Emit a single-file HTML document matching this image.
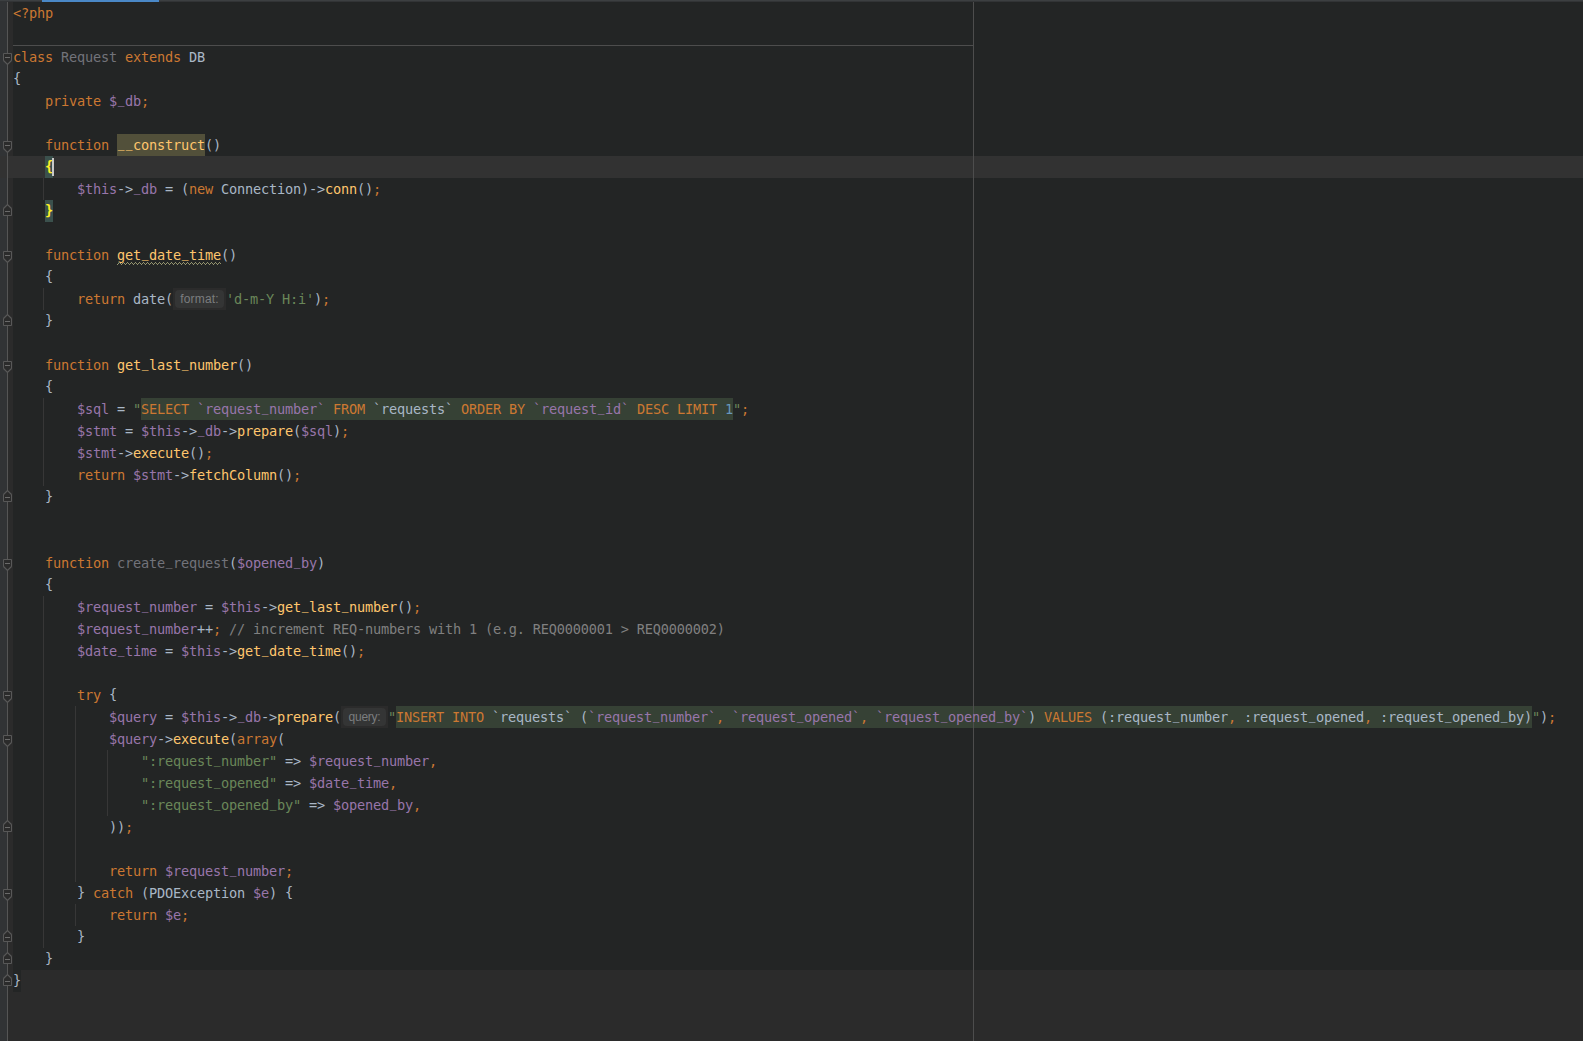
<!DOCTYPE html>
<html lang="en"><head><meta charset="utf-8"><title>Request.php</title>
<style>
html,body{margin:0;padding:0;background:#2b2b2b;}
body{width:1583px;height:1041px;position:relative;overflow:hidden;font-family:"DejaVu Sans Mono", "Liberation Mono", monospace;}
#code{position:absolute;left:13px;top:2px;width:1570px;height:968px;background:#232525;}
#last{position:absolute;left:13px;top:970px;width:8px;height:22px;background:#232525;}
#gut{position:absolute;left:0;top:2px;width:8px;height:1039px;background:#313335;}
#gut2{position:absolute;left:8px;top:2px;width:5px;height:1039px;background:#2b2b2b;}
#fl{position:absolute;left:7px;top:2px;width:1px;height:1039px;background:#555555;}
#top0{position:absolute;left:0;top:0;width:1583px;height:1px;background:#3c3f41;}
#top1{position:absolute;left:0;top:1px;width:1583px;height:1px;background:#323436;}
#tab{position:absolute;left:42px;top:0;width:117px;height:2px;background:#4a88c7;}
#cur{position:absolute;left:0;top:156px;width:1583px;height:22px;background:#323232;}
#rm{position:absolute;left:973px;top:2px;width:1px;height:1039px;background:#4d4d4d;}
#sep{position:absolute;left:13px;top:45px;width:960px;height:1px;background:#4d4d4d;}
#caret{position:absolute;left:52px;top:158px;width:2px;height:18px;background:#c8c8c8;}
.r{position:absolute;}
.ig{position:absolute;width:1px;background:#373737;}
.fm{position:absolute;left:0;}
.wavy{position:absolute;} .wavy pattern rect{fill:#95956f} .ln i{font-style:normal;position:relative;top:-3px;display:inline-block;transform:scaleX(0.82)} .ln b{font-weight:inherit;position:relative;top:-1px}
.ln{position:absolute;left:13px;height:22px;line-height:22px;width:1570px;white-space:pre;font-size:13.6px;letter-spacing:-0.1879px;}
.ln span{display:inline-block;height:22px;vertical-align:top;overflow:visible;}
.k{color:#cc7832}.d{color:#a9b7c6}.f{color:#ffc66d}.v{color:#9876aa}.s{color:#6a8759}.c{color:#808080}.n{color:#6897bb}.u{color:#72737a}
.b{color:#ffef28;font-weight:bold}
.ln span.hint{margin:2px 2px 0 2px;height:18px;line-height:19px;border-radius:4px;background:#343535;color:#7b7d7f;font-family:"Liberation Sans","DejaVu Sans",sans-serif;font-size:12px;text-align:center;}
</style></head>
<body>
<div id="code"></div><div id="last"></div>
<div id="cur"></div>
<div id="gut"></div><div id="gut2"></div>
<div id="gcur" style="position:absolute;left:0;top:156px;width:13px;height:22px;background:#323232"></div>
<div id="fl"></div>
<div id="top0"></div><div id="top1"></div><div id="tab"></div>
<div id="sep"></div>
<div class="r" style="left:117px;top:134px;width:88px;height:22px;background:#52503a"></div><div class="r" style="left:45px;top:156px;width:8px;height:22px;background:#3b514d"></div><div class="r" style="left:45px;top:200px;width:8px;height:22px;background:#3b514d"></div><div class="r" style="left:173px;top:288px;width:53px;height:22px;background:#2b2b2b"></div><div class="r" style="left:141px;top:398px;width:592px;height:22px;background:#364135"></div><div class="r" style="left:341px;top:706px;width:47px;height:22px;background:#2b2b2b"></div><div class="r" style="left:396px;top:706px;width:1136px;height:22px;background:#364135"></div>
<div class="ig" style="left:43px;top:178px;height:22px"></div><div class="ig" style="left:43px;top:288px;height:22px"></div><div class="ig" style="left:43px;top:398px;height:88px"></div><div class="ig" style="left:43px;top:596px;height:352px"></div><div class="ig" style="left:75px;top:706px;height:176px"></div><div class="ig" style="left:75px;top:904px;height:22px"></div><div class="ig" style="left:107px;top:750px;height:66px"></div>
<div id="rm"></div>
<svg class="fm" style="top:46px" width="14" height="22" viewBox="0 0 14 22"><path d="M3.5 7.5H11.5V14.5L7.5 18.5L3.5 14.5Z" fill="#2b2b2b" stroke="#585858"/><path d="M11.5 14.5L7.5 18.5L3.5 14.5" fill="none" stroke="#585858" stroke-width="1.2"/><path d="M5 11.5H10" stroke="#6a6a6a"/></svg><svg class="fm" style="top:134px" width="14" height="22" viewBox="0 0 14 22"><path d="M3.5 7.5H11.5V14.5L7.5 18.5L3.5 14.5Z" fill="#2b2b2b" stroke="#585858"/><path d="M11.5 14.5L7.5 18.5L3.5 14.5" fill="none" stroke="#585858" stroke-width="1.2"/><path d="M5 11.5H10" stroke="#6a6a6a"/></svg><svg class="fm" style="top:244px" width="14" height="22" viewBox="0 0 14 22"><path d="M3.5 7.5H11.5V14.5L7.5 18.5L3.5 14.5Z" fill="#2b2b2b" stroke="#585858"/><path d="M11.5 14.5L7.5 18.5L3.5 14.5" fill="none" stroke="#585858" stroke-width="1.2"/><path d="M5 11.5H10" stroke="#6a6a6a"/></svg><svg class="fm" style="top:354px" width="14" height="22" viewBox="0 0 14 22"><path d="M3.5 7.5H11.5V14.5L7.5 18.5L3.5 14.5Z" fill="#2b2b2b" stroke="#585858"/><path d="M11.5 14.5L7.5 18.5L3.5 14.5" fill="none" stroke="#585858" stroke-width="1.2"/><path d="M5 11.5H10" stroke="#6a6a6a"/></svg><svg class="fm" style="top:552px" width="14" height="22" viewBox="0 0 14 22"><path d="M3.5 7.5H11.5V14.5L7.5 18.5L3.5 14.5Z" fill="#2b2b2b" stroke="#585858"/><path d="M11.5 14.5L7.5 18.5L3.5 14.5" fill="none" stroke="#585858" stroke-width="1.2"/><path d="M5 11.5H10" stroke="#6a6a6a"/></svg><svg class="fm" style="top:684px" width="14" height="22" viewBox="0 0 14 22"><path d="M3.5 7.5H11.5V14.5L7.5 18.5L3.5 14.5Z" fill="#2b2b2b" stroke="#585858"/><path d="M11.5 14.5L7.5 18.5L3.5 14.5" fill="none" stroke="#585858" stroke-width="1.2"/><path d="M5 11.5H10" stroke="#6a6a6a"/></svg><svg class="fm" style="top:728px" width="14" height="22" viewBox="0 0 14 22"><path d="M3.5 7.5H11.5V14.5L7.5 18.5L3.5 14.5Z" fill="#2b2b2b" stroke="#585858"/><path d="M11.5 14.5L7.5 18.5L3.5 14.5" fill="none" stroke="#585858" stroke-width="1.2"/><path d="M5 11.5H10" stroke="#6a6a6a"/></svg><svg class="fm" style="top:882px" width="14" height="22" viewBox="0 0 14 22"><path d="M3.5 7.5H11.5V14.5L7.5 18.5L3.5 14.5Z" fill="#2b2b2b" stroke="#585858"/><path d="M11.5 14.5L7.5 18.5L3.5 14.5" fill="none" stroke="#585858" stroke-width="1.2"/><path d="M5 11.5H10" stroke="#6a6a6a"/></svg><svg class="fm" style="top:200px" width="14" height="22" viewBox="0 0 14 22"><path d="M7.5 4.5L11.5 8.5V15.5H3.5V8.5Z" fill="#2b2b2b" stroke="#585858"/><path d="M3.5 8.5L7.5 4.5L11.5 8.5" fill="none" stroke="#585858" stroke-width="1.2"/><path d="M5 11.5H10" stroke="#6a6a6a"/></svg><svg class="fm" style="top:310px" width="14" height="22" viewBox="0 0 14 22"><path d="M7.5 4.5L11.5 8.5V15.5H3.5V8.5Z" fill="#2b2b2b" stroke="#585858"/><path d="M3.5 8.5L7.5 4.5L11.5 8.5" fill="none" stroke="#585858" stroke-width="1.2"/><path d="M5 11.5H10" stroke="#6a6a6a"/></svg><svg class="fm" style="top:486px" width="14" height="22" viewBox="0 0 14 22"><path d="M7.5 4.5L11.5 8.5V15.5H3.5V8.5Z" fill="#2b2b2b" stroke="#585858"/><path d="M3.5 8.5L7.5 4.5L11.5 8.5" fill="none" stroke="#585858" stroke-width="1.2"/><path d="M5 11.5H10" stroke="#6a6a6a"/></svg><svg class="fm" style="top:816px" width="14" height="22" viewBox="0 0 14 22"><path d="M7.5 4.5L11.5 8.5V15.5H3.5V8.5Z" fill="#2b2b2b" stroke="#585858"/><path d="M3.5 8.5L7.5 4.5L11.5 8.5" fill="none" stroke="#585858" stroke-width="1.2"/><path d="M5 11.5H10" stroke="#6a6a6a"/></svg><svg class="fm" style="top:926px" width="14" height="22" viewBox="0 0 14 22"><path d="M7.5 4.5L11.5 8.5V15.5H3.5V8.5Z" fill="#2b2b2b" stroke="#585858"/><path d="M3.5 8.5L7.5 4.5L11.5 8.5" fill="none" stroke="#585858" stroke-width="1.2"/><path d="M5 11.5H10" stroke="#6a6a6a"/></svg><svg class="fm" style="top:948px" width="14" height="22" viewBox="0 0 14 22"><path d="M7.5 4.5L11.5 8.5V15.5H3.5V8.5Z" fill="#2b2b2b" stroke="#585858"/><path d="M3.5 8.5L7.5 4.5L11.5 8.5" fill="none" stroke="#585858" stroke-width="1.2"/><path d="M5 11.5H10" stroke="#6a6a6a"/></svg><svg class="fm" style="top:970px" width="14" height="22" viewBox="0 0 14 22"><path d="M7.5 4.5L11.5 8.5V15.5H3.5V8.5Z" fill="#2b2b2b" stroke="#585858"/><path d="M3.5 8.5L7.5 4.5L11.5 8.5" fill="none" stroke="#585858" stroke-width="1.2"/><path d="M5 11.5H10" stroke="#6a6a6a"/></svg>
<div class="ln" style="top:2px" aria-label="&lt;?php"><span class="k" style="width:40px">&lt;?php</span></div>
<div class="ln" style="top:46px" aria-label="class Request extends DB"><span class="k" style="width:48px">class </span><span class="u" style="width:64px">Request </span><span class="k" style="width:64px">extends </span><span class="d" style="width:16px">DB</span></div>
<div class="ln" style="top:68px" aria-label="{"><span class="d" style="width:8px"><b>{</b></span></div>
<div class="ln" style="top:90px" aria-label="private $_db;"><span class="k" style="width:96px">    private </span><span class="v" style="width:32px">$<i>_</i>db</span><span class="k" style="width:8px">;</span></div>
<div class="ln" style="top:134px" aria-label="function __construct()"><span class="k" style="width:104px">    function </span><span class="f" style="width:88px"><i>_</i><i>_</i>construct</span><span class="d" style="width:16px">()</span></div>
<div class="ln" style="top:156px" aria-label="{"><span class="b" style="width:40px">    <b>{</b></span></div>
<div class="ln" style="top:178px" aria-label="$this-&gt;_db = (new Connection)-&gt;conn();"><span class="v" style="width:104px">        $this</span><span class="d" style="width:16px">-&gt;</span><span class="v" style="width:24px"><i>_</i>db</span><span class="d" style="width:32px"> = (</span><span class="k" style="width:32px">new </span><span class="d" style="width:104px">Connection)-&gt;</span><span class="f" style="width:32px">conn</span><span class="d" style="width:16px">()</span><span class="k" style="width:8px">;</span></div>
<div class="ln" style="top:200px" aria-label="}"><span class="b" style="width:40px">    <b>}</b></span></div>
<div class="ln" style="top:244px" aria-label="function get_date_time()"><span class="k" style="width:104px">    function </span><span class="f" style="width:104px">get<i>_</i>date<i>_</i>time</span><span class="d" style="width:16px">()</span></div>
<div class="ln" style="top:266px" aria-label="{"><span class="d" style="width:40px">    <b>{</b></span></div>
<div class="ln" style="top:288px" aria-label="return date( format: &#x27;d-m-Y H:i&#x27;);"><span class="k" style="width:120px">        return </span><span class="d" style="width:40px">date(</span><span class="hint" style="width:49px;letter-spacing:0.15px">format:</span><span class="s" style="width:88px">&#x27;d-m-Y H:i&#x27;</span><span class="d" style="width:8px">)</span><span class="k" style="width:8px">;</span></div>
<div class="ln" style="top:310px" aria-label="}"><span class="d" style="width:40px">    <b>}</b></span></div>
<div class="ln" style="top:354px" aria-label="function get_last_number()"><span class="k" style="width:104px">    function </span><span class="f" style="width:120px">get<i>_</i>last<i>_</i>number</span><span class="d" style="width:16px">()</span></div>
<div class="ln" style="top:376px" aria-label="{"><span class="d" style="width:40px">    <b>{</b></span></div>
<div class="ln" style="top:398px" aria-label="$sql = &quot;SELECT `request_number` FROM `requests` ORDER BY `request_id` DESC LIMIT 1&quot;;"><span class="v" style="width:96px">        $sql</span><span class="d" style="width:24px"> = </span><span class="s" style="width:8px">&quot;</span><span class="k" style="width:56px">SELECT </span><span class="v" style="width:128px">`request<i>_</i>number`</span><span class="k" style="width:48px"> FROM </span><span class="d" style="width:80px">`requests`</span><span class="k" style="width:80px"> ORDER BY </span><span class="v" style="width:96px">`request<i>_</i>id`</span><span class="k" style="width:96px"> DESC LIMIT </span><span class="n" style="width:8px">1</span><span class="s" style="width:8px">&quot;</span><span class="k" style="width:8px">;</span></div>
<div class="ln" style="top:420px" aria-label="$stmt = $this-&gt;_db-&gt;prepare($sql);"><span class="v" style="width:104px">        $stmt</span><span class="d" style="width:24px"> = </span><span class="v" style="width:40px">$this</span><span class="d" style="width:16px">-&gt;</span><span class="v" style="width:24px"><i>_</i>db</span><span class="d" style="width:16px">-&gt;</span><span class="f" style="width:56px">prepare</span><span class="d" style="width:8px">(</span><span class="v" style="width:32px">$sql</span><span class="d" style="width:8px">)</span><span class="k" style="width:8px">;</span></div>
<div class="ln" style="top:442px" aria-label="$stmt-&gt;execute();"><span class="v" style="width:104px">        $stmt</span><span class="d" style="width:16px">-&gt;</span><span class="f" style="width:56px">execute</span><span class="d" style="width:16px">()</span><span class="k" style="width:8px">;</span></div>
<div class="ln" style="top:464px" aria-label="return $stmt-&gt;fetchColumn();"><span class="k" style="width:120px">        return </span><span class="v" style="width:40px">$stmt</span><span class="d" style="width:16px">-&gt;</span><span class="f" style="width:88px">fetchColumn</span><span class="d" style="width:16px">()</span><span class="k" style="width:8px">;</span></div>
<div class="ln" style="top:486px" aria-label="}"><span class="d" style="width:40px">    <b>}</b></span></div>
<div class="ln" style="top:552px" aria-label="function create_request($opened_by)"><span class="k" style="width:104px">    function </span><span class="u" style="width:112px">create<i>_</i>request</span><span class="d" style="width:8px">(</span><span class="v" style="width:80px">$opened<i>_</i>by</span><span class="d" style="width:8px">)</span></div>
<div class="ln" style="top:574px" aria-label="{"><span class="d" style="width:40px">    <b>{</b></span></div>
<div class="ln" style="top:596px" aria-label="$request_number = $this-&gt;get_last_number();"><span class="v" style="width:184px">        $request<i>_</i>number</span><span class="d" style="width:24px"> = </span><span class="v" style="width:40px">$this</span><span class="d" style="width:16px">-&gt;</span><span class="f" style="width:120px">get<i>_</i>last<i>_</i>number</span><span class="d" style="width:16px">()</span><span class="k" style="width:8px">;</span></div>
<div class="ln" style="top:618px" aria-label="$request_number++; // increment REQ-numbers with 1 (e.g. REQ0000001 &gt; REQ0000002)"><span class="v" style="width:184px">        $request<i>_</i>number</span><span class="d" style="width:16px">++</span><span class="k" style="width:16px">; </span><span class="c" style="width:496px">// increment REQ-numbers with 1 (e.g. REQ0000001 &gt; REQ0000002)</span></div>
<div class="ln" style="top:640px" aria-label="$date_time = $this-&gt;get_date_time();"><span class="v" style="width:144px">        $date<i>_</i>time</span><span class="d" style="width:24px"> = </span><span class="v" style="width:40px">$this</span><span class="d" style="width:16px">-&gt;</span><span class="f" style="width:104px">get<i>_</i>date<i>_</i>time</span><span class="d" style="width:16px">()</span><span class="k" style="width:8px">;</span></div>
<div class="ln" style="top:684px" aria-label="try {"><span class="k" style="width:96px">        try </span><span class="d" style="width:8px"><b>{</b></span></div>
<div class="ln" style="top:706px" aria-label="$query = $this-&gt;_db-&gt;prepare( query: &quot;INSERT INTO `requests` (`request_number`, `request_opened`, `request_opened_by`) VALUES (:request_number, :request_opened, :request_opened_by)&quot;);"><span class="v" style="width:144px">            $query</span><span class="d" style="width:24px"> = </span><span class="v" style="width:40px">$this</span><span class="d" style="width:16px">-&gt;</span><span class="v" style="width:24px"><i>_</i>db</span><span class="d" style="width:16px">-&gt;</span><span class="f" style="width:56px">prepare</span><span class="d" style="width:8px">(</span><span class="hint" style="width:43px;letter-spacing:-0.25px">query:</span><span class="s" style="width:8px">&quot;</span><span class="k" style="width:96px">INSERT INTO </span><span class="d" style="width:96px">`requests` (</span><span class="v" style="width:128px">`request<i>_</i>number`</span><span class="k" style="width:16px">, </span><span class="v" style="width:128px">`request<i>_</i>opened`</span><span class="k" style="width:16px">, </span><span class="v" style="width:152px">`request<i>_</i>opened<i>_</i>by`</span><span class="d" style="width:8px">)</span><span class="k" style="width:64px"> VALUES </span><span class="d" style="width:128px">(:request<i>_</i>number</span><span class="k" style="width:16px">, </span><span class="d" style="width:120px">:request<i>_</i>opened</span><span class="k" style="width:16px">, </span><span class="d" style="width:152px">:request<i>_</i>opened<i>_</i>by)</span><span class="s" style="width:8px">&quot;</span><span class="d" style="width:8px">)</span><span class="k" style="width:8px">;</span></div>
<div class="ln" style="top:728px" aria-label="$query-&gt;execute(array("><span class="v" style="width:144px">            $query</span><span class="d" style="width:16px">-&gt;</span><span class="f" style="width:56px">execute</span><span class="d" style="width:8px">(</span><span class="k" style="width:40px">array</span><span class="d" style="width:8px">(</span></div>
<div class="ln" style="top:750px" aria-label="&quot;:request_number&quot; =&gt; $request_number,"><span class="s" style="width:264px">                &quot;:request<i>_</i>number&quot;</span><span class="d" style="width:32px"> =&gt; </span><span class="v" style="width:120px">$request<i>_</i>number</span><span class="k" style="width:8px">,</span></div>
<div class="ln" style="top:772px" aria-label="&quot;:request_opened&quot; =&gt; $date_time,"><span class="s" style="width:264px">                &quot;:request<i>_</i>opened&quot;</span><span class="d" style="width:32px"> =&gt; </span><span class="v" style="width:80px">$date<i>_</i>time</span><span class="k" style="width:8px">,</span></div>
<div class="ln" style="top:794px" aria-label="&quot;:request_opened_by&quot; =&gt; $opened_by,"><span class="s" style="width:288px">                &quot;:request<i>_</i>opened<i>_</i>by&quot;</span><span class="d" style="width:32px"> =&gt; </span><span class="v" style="width:80px">$opened<i>_</i>by</span><span class="k" style="width:8px">,</span></div>
<div class="ln" style="top:816px" aria-label="));"><span class="d" style="width:112px">            ))</span><span class="k" style="width:8px">;</span></div>
<div class="ln" style="top:860px" aria-label="return $request_number;"><span class="k" style="width:152px">            return </span><span class="v" style="width:120px">$request<i>_</i>number</span><span class="k" style="width:8px">;</span></div>
<div class="ln" style="top:882px" aria-label="} catch (PDOException $e) {"><span class="d" style="width:80px">        <b>}</b> </span><span class="k" style="width:48px">catch </span><span class="d" style="width:112px">(PDOException </span><span class="v" style="width:16px">$e</span><span class="d" style="width:24px">) <b>{</b></span></div>
<div class="ln" style="top:904px" aria-label="return $e;"><span class="k" style="width:152px">            return </span><span class="v" style="width:16px">$e</span><span class="k" style="width:8px">;</span></div>
<div class="ln" style="top:926px" aria-label="}"><span class="d" style="width:72px">        <b>}</b></span></div>
<div class="ln" style="top:948px" aria-label="}"><span class="d" style="width:40px">    <b>}</b></span></div>
<div class="ln" style="top:970px" aria-label="}"><span class="d" style="width:8px"><b>}</b></span></div>
<svg class="wavy" style="left:117px;top:262px" width="104" height="3" viewBox="0 0 104 3" shape-rendering="crispEdges"><defs><pattern id="wv" width="4" height="3" patternUnits="userSpaceOnUse"><rect x="0" y="2" width="1" height="1"/><rect x="1" y="1" width="1" height="1"/><rect x="2" y="0" width="1" height="1"/><rect x="3" y="1" width="1" height="1"/></pattern></defs><rect width="104" height="3" fill="url(#wv)"/></svg>
<div id="caret"></div>
</body></html>
